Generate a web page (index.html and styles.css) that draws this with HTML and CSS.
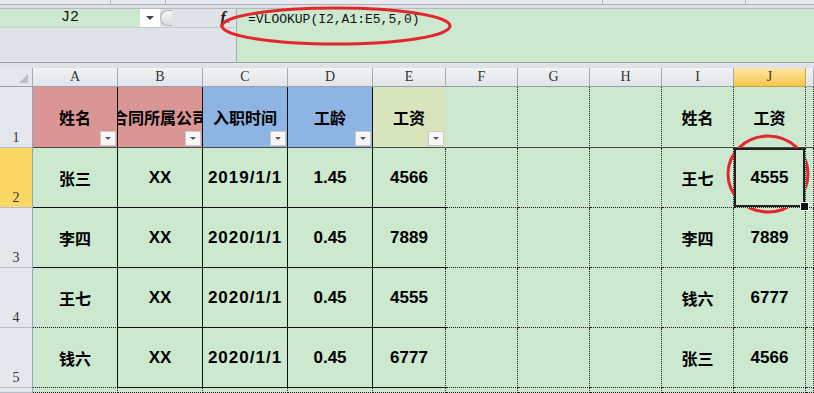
FILE: index.html
```html
<!DOCTYPE html>
<html lang="zh-CN">
<head>
    <meta charset="UTF-8">
    <title>VLOOKUP</title>
    <link rel="stylesheet" href="styles.css">
</head>
<body>

<div class="ribbon">
    <span style="width:111px"></span>
    <span style="width:55px"></span>
    <span style="width:437px"></span>
    <span style="width:143px"></span>
</div>

<div class="fbar">
    <div class="fleft">
        <div class="namerow">
            <div class="namebox">J2</div>
            <div class="nbdrop"><span class="tri"></span></div>
            <div class="splitter"></div>
            <div class="fx">f<span>x</span></div>
        </div>
    </div>
    <div class="formula">=VLOOKUP(I2,A1:E5,5,0)</div>
</div>

<div class="sheet">
    <!-- column headers -->
    <div class="corner"><span class="selall"></span></div>
    <div class="ch">A</div>
    <div class="ch">B</div>
    <div class="ch">C</div>
    <div class="ch">D</div>
    <div class="ch">E</div>
    <div class="ch">F</div>
    <div class="ch">G</div>
    <div class="ch">H</div>
    <div class="ch">I</div>
    <div class="ch on">J</div>
    <div class="ch"></div>

    <!-- row 1 -->
    <div class="rh">1</div>
    <div class="c t r1 pink cn">姓名<span class="filt"></span></div>
    <div class="c t r1 pink cn">合同所属公司<span class="filt"></span></div>
    <div class="c t r1 blue cn">入职时间<span class="filt"></span></div>
    <div class="c t r1 blue cn">工龄<span class="filt"></span></div>
    <div class="c r1 olive cn noline">工资<span class="filt"></span></div>
    <div class="c r1"></div>
    <div class="c r1"></div>
    <div class="c r1"></div>
    <div class="c r1 cn">姓名</div>
    <div class="c r1 cn">工资</div>
    <div class="c r1"></div>

    <!-- row 2 -->
    <div class="rh on">2</div>
    <div class="c t cn">张三</div>
    <div class="c t">XX</div>
    <div class="c t d">2019/1/1</div>
    <div class="c t">1.45</div>
    <div class="c t tl">4566</div>
    <div class="c"></div>
    <div class="c"></div>
    <div class="c"></div>
    <div class="c cn">王七</div>
    <div class="c sel">4555</div>
    <div class="c"></div>

    <!-- row 3 -->
    <div class="rh">3</div>
    <div class="c t cn">李四</div>
    <div class="c t">XX</div>
    <div class="c t d">2020/1/1</div>
    <div class="c t">0.45</div>
    <div class="c t tl">7889</div>
    <div class="c"></div>
    <div class="c"></div>
    <div class="c"></div>
    <div class="c cn">李四</div>
    <div class="c">7889</div>
    <div class="c"></div>

    <!-- row 4 -->
    <div class="rh">4</div>
    <div class="c t cn dotb">王七</div>
    <div class="c t">XX</div>
    <div class="c t d">2020/1/1</div>
    <div class="c t">0.45</div>
    <div class="c t tl">4555</div>
    <div class="c"></div>
    <div class="c"></div>
    <div class="c"></div>
    <div class="c cn">钱六</div>
    <div class="c">6777</div>
    <div class="c"></div>

    <!-- row 5 -->
    <div class="rh">5</div>
    <div class="c t cn dotb">钱六</div>
    <div class="c t">XX</div>
    <div class="c t d">2020/1/1</div>
    <div class="c t">0.45</div>
    <div class="c t tl">6777</div>
    <div class="c"></div>
    <div class="c"></div>
    <div class="c"></div>
    <div class="c cn">张三</div>
    <div class="c">4566</div>
    <div class="c"></div>

    <!-- row 6, only its top edge shows -->
    <div class="rh"></div>
    <div class="c"></div>
    <div class="c"></div>
    <div class="c"></div>
    <div class="c"></div>
    <div class="c"></div>
    <div class="c"></div>
    <div class="c"></div>
    <div class="c"></div>
    <div class="c"></div>
    <div class="c"></div>
    <div class="c"></div>
</div>

<svg class="marks" width="814" height="393" viewBox="0 0 814 393">
    <ellipse cx="336" cy="26" rx="114" ry="18" fill="none" stroke="#e3262b" stroke-width="3"/>
    <ellipse cx="768" cy="174" rx="40" ry="38" fill="none" stroke="#e3262b" stroke-width="3"/>
</svg>

</body>
</html>
```

FILE: styles.css
```css
* {
    box-sizing: border-box;
}
body {
    margin: 0;
    width: 814px;
    height: 393px;
    overflow: hidden;
    position: relative;
    background: #dfe3e8;
    font-family: "Liberation Sans", Arial, sans-serif;
}

/* top strip and formula bar */
.ribbon {
    height: 5px;
    display: flex;
    background: #e8ebef;
    border-bottom: 1px solid #a9aeb5;
}
.ribbon span {
    border-right: 1px solid #b5bac1;
}
.fbar {
    margin-top: 3px;
    height: 55px;
    display: flex;
    border-top: 1px solid #b4b9c0;
    border-bottom: 1px solid #9ea4ac;
}
.fleft {
    width: 237px;
    border-right: 1px solid #a8aeb6;
    display: flex;
    flex-direction: column;
}
.namerow {
    height: 19px;
    display: flex;
    align-items: stretch;
    border-bottom: 1px solid #c4c9cf;
}
.namebox {
    width: 140px;
    background: #cce8cf;
    text-align: center;
    font: 15px/18px "Liberation Mono", monospace;
    color: #111;
}
.nbdrop {
    width: 20px;
    background: #fff;
    display: flex;
    align-items: center;
    justify-content: center;
}
.tri {
    border-left: 4px solid transparent;
    border-right: 4px solid transparent;
    border-top: 4px solid #444;
}
.splitter {
    width: 12px;
    margin: 1px 0;
    border: 1px solid #aeb3ba;
    border-right: none;
    border-radius: 9px 0 0 9px;
    background: linear-gradient(#f6f7f9, #d9dde2);
}
.fx {
    margin-left: auto;
    margin-right: 6px;
    font: italic bold 17px/18px "Liberation Serif", serif;
    color: #222;
}
.fx span {
    font-size: 8px;
    color: #555;
}
.formula {
    flex: 1;
    background: #cce8cf;
    padding: 2px 11px;
    font: 13px/18px "Liberation Mono", monospace;
    color: #111;
}

/* sheet */
.sheet {
    margin-top: 5px;
    display: grid;
    grid-template-columns: 33px 85px 85px 85px 85px 73px 72px 72px 72px 72px 72px 1fr;
    grid-template-rows: 19px 61px 60px 60px 60px 60px 5px;
}
.corner {
    background: #e4e7eb;
    border-right: 1px solid #a4abb5;
    border-bottom: 1px solid #9aa1ab;
    display: flex;
    align-items: flex-end;
    justify-content: flex-end;
    padding: 0 4px 3px 0;
}
.selall {
    border-left: 9px solid transparent;
    border-bottom: 9px solid #b9bec6;
}
.ch {
    background: linear-gradient(#f1f3f5, #e1e4e8);
    border-right: 1px solid #a4abb5;
    border-bottom: 1px solid #9aa1ab;
    text-align: center;
    font: 14px/18px "Liberation Serif", serif;
    color: #333;
}
.ch.on {
    background: linear-gradient(#fce7a4, #f5c64d);
    border-color: #c8a04a;
}
.rh {
    background: #e4e7eb;
    border-right: 1px solid #9aa1ab;
    border-bottom: 1px solid #b7bdc6;
    display: flex;
    align-items: flex-end;
    justify-content: center;
    padding-bottom: 1px;
    font: 14px "Liberation Serif", serif;
    color: #333;
}
.rh.on {
    background: #fbd766;
}

.c {
    position: relative;
    overflow: hidden;
    white-space: nowrap;
    display: flex;
    align-items: center;
    justify-content: center;
    background: #cce8cf;
    border-right: 1px dotted #1a1a1a;
    border-bottom: 1px dotted #1a1a1a;
    font-weight: bold;
    font-size: 17px;
    color: #000;
}
.c.t {
    border-right: 1px solid #111;
    border-bottom: 1px solid #111;
}
.c.tl {
    border-right: 1px dotted #1a1a1a;
}
.c.dotb {
    border-bottom: 1px dotted #1a1a1a;
}
.c.r1 {
    border-bottom: 1px solid #4a4a4a;
}
.c.noline {
    border-right-color: transparent;
}
.c.d {
    letter-spacing: 1px;
}
.cn {
    font-family: "Noto Sans CJK SC", sans-serif;
    font-size: 16px;
}
.pink {
    background: #da9694;
}
.blue {
    background: #8db4e2;
}
.olive {
    background: #d8e4bc;
}

/* autofilter buttons */
.filt {
    position: absolute;
    right: 1px;
    bottom: 1px;
    width: 16px;
    height: 15px;
    background: #f7f7f7;
    border: 1px solid #c9c9c9;
    display: flex;
    align-items: center;
    justify-content: center;
}
.filt::after {
    content: "";
    border-left: 3px solid transparent;
    border-right: 3px solid transparent;
    border-top: 3px solid #555;
}

/* active cell */
.c.sel {
    overflow: visible;
    z-index: 1;
    box-shadow: inset 0 0 0 2px #222;
}
.c.sel::after {
    content: "";
    position: absolute;
    right: -4px;
    bottom: -4px;
    width: 7px;
    height: 7px;
    background: #111;
    border: 1px solid #fff;
}

.marks {
    position: absolute;
    left: 0;
    top: 0;
    pointer-events: none;
}
```
